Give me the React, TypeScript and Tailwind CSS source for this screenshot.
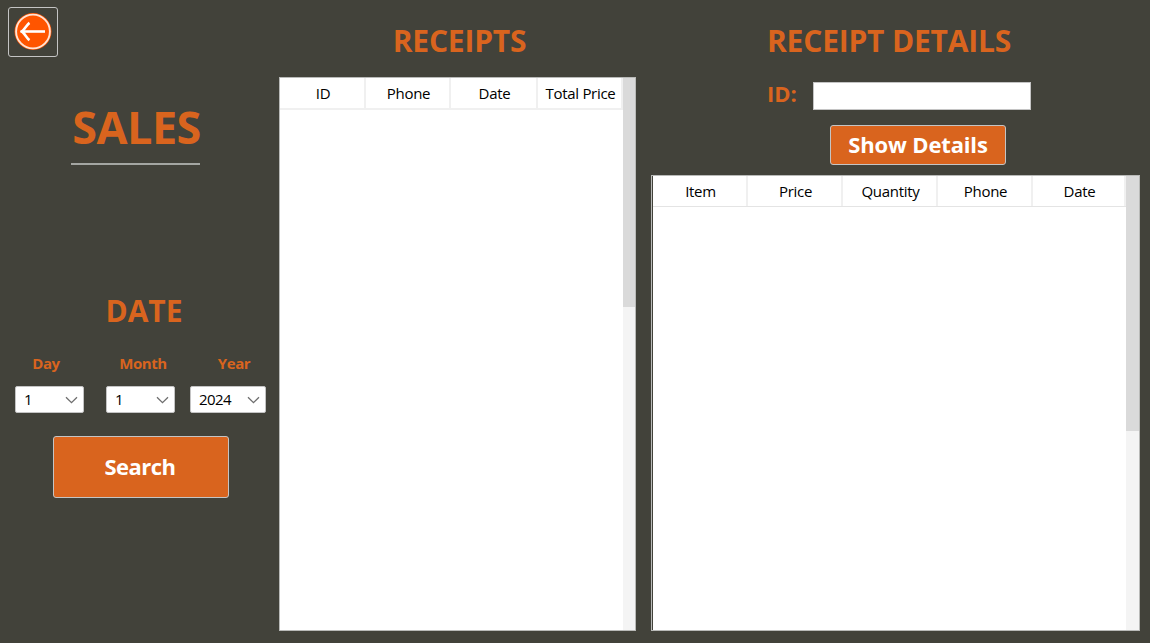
import React from "react";

function Select({ value, width }: { value: string; width: string }) {
  return (
    <button
      className={`flex h-[27px] items-center justify-between rounded-[2px] border border-[#c4c4c4] bg-white pr-[5px] pl-[8px] text-[15px] leading-none text-black ${width}`}
    >
      <span className="tracking-[-0.6px]">{value}</span>
      <svg width="13" height="9" viewBox="0 0 13 9" fill="none" stroke="#6e6e6e" strokeWidth="1.3">
        <path d="M1 2.2 L6.5 7.7 L12 2.2" />
      </svg>
    </button>
  );
}

function HeaderCell({ label, className }: { label: string; className: string }) {
  return (
    <div className={`flex shrink-0 items-center justify-center border-r-2 border-[#f0f0f0] pl-[2px] text-[15px] leading-none tracking-[-0.3px] whitespace-nowrap text-black ${className}`}>
      {label}
    </div>
  );
}

function ScrollBar({ width, thumb }: { width: string; thumb: string }) {
  return (
    <div className={`shrink-0 bg-[#f4f4f4] ${width}`}>
      <div className={`bg-[#dadada] ${thumb}`} />
    </div>
  );
}

export default function App() {
  return (
    <div className="flex h-[643px] w-[1150px] overflow-hidden bg-[#42423a] font-['Open_Sans','Noto_Sans',sans-serif] text-[#d9641e]">
      <aside className="flex w-[279px] shrink-0 flex-col">
        <button className="mt-[7px] ml-[8px] flex size-[50px] items-center justify-center rounded-[3px] border border-[#c4c4c4]">
          <svg width="38" height="38" viewBox="0 0 38 38" fill="none">
            <circle cx="19" cy="18.5" r="18.5" fill="#ff5500" />
            <circle cx="19" cy="18.5" r="16.9" stroke="#ffe4d6" strokeWidth="1.9" />
            <path d="M6.5 18.5H31" stroke="#fff" strokeWidth="2.6" />
            <path d="M15.5 9.8C13 11.5 11.5 15.5 8 18.5C11.5 21.5 13 25.5 15.5 27.2" stroke="#fff" strokeWidth="2.6" />
          </svg>
        </button>
        <h1 className="mt-[40px] ml-[71px] h-[60px] w-[131px] text-center text-[45px] leading-[60px] font-bold tracking-[-0.5px] whitespace-nowrap">
          SALES
        </h1>
        <div className="mt-[6px] ml-[71px] h-[2px] w-[129px] bg-[#a4a6a2]" />
        <h2 className="mt-[126px] ml-[94px] h-[40px] w-[100px] text-center text-[30px] leading-[40px] font-bold">DATE</h2>
        <div className="mt-[22px] flex h-5 text-[15px] leading-5 font-bold tracking-[-0.4px]">
          <span className="ml-[16px] w-[60px] text-center">Day</span>
          <span className="ml-[37px] w-[60px] text-center">Month</span>
          <span className="ml-[31px] w-[60px] text-center">Year</span>
        </div>
        <div className="mt-[13px] ml-[15px] flex">
          <Select value="1" width="w-[69px]" />
          <div className="w-[22px]" />
          <Select value="1" width="w-[69px]" />
          <div className="w-[15px]" />
          <Select value="2024" width="w-[76px]" />
        </div>
        <button className="mt-[23px] ml-[53px] h-[62px] w-[176px] rounded-[3px] border border-[#c4c4c4] bg-[#d9641e] pr-[2px] pb-[2px] text-[22px] font-bold tracking-[-0.5px] text-white">
          Search
        </button>
      </aside>

      <section className="flex w-[357px] shrink-0 flex-col">
        <h2 className="mt-[21px] h-[40px] pl-[4px] text-center text-[30px] leading-[40px] font-bold tracking-[-0.2px]">
          RECEIPTS
        </h2>
        <div className="mt-[16px] flex h-[554px] border border-[#b9bab8] bg-white">
          <div className="flex h-[32px] w-[343px] shrink-0 border-b-2 border-[#f0f0f0]">
            <HeaderCell label="ID" className="w-[86px]" />
            <HeaderCell label="Phone" className="w-[85px]" />
            <HeaderCell label="Date" className="w-[87px]" />
            <HeaderCell label="Total Price" className="w-[85px]" />
          </div>
          <ScrollBar width="w-[12px]" thumb="h-[229px]" />
        </div>
      </section>

      <section className="ml-[15px] flex w-[489px] shrink-0 flex-col">
        <h2 className="mt-[21px] h-[40px] pr-[13px] text-center text-[30px] leading-[40px] font-bold tracking-[-0.2px] whitespace-nowrap">
          RECEIPT DETAILS
        </h2>
        <div className="mt-[21px] flex h-[28px]">
          <label className="ml-[116px] w-[46px] text-[22px] leading-[22px] font-bold">ID:</label>
          <input className="h-[28px] w-[218px] border border-[#c4c4c4] bg-white outline-none" />
        </div>
        <button className="mt-[15px] ml-[179px] h-[40px] w-[176px] rounded-[3px] border border-[#c4c4c4] bg-[#d9641e] pb-[2px] text-[22px] leading-none font-bold tracking-[-0.15px] whitespace-nowrap text-white">
          Show Details
        </button>
        <div className="mt-[10px] flex h-[456px] border border-[#b9bab8] bg-white">
          <div className="w-px shrink-0 bg-[#42423a]" />
          <div className="flex h-[31px] w-[473px] shrink-0 border-b border-[#e4e4e4]">
            <HeaderCell label="Item" className="w-[95px]" />
            <HeaderCell label="Price" className="w-[95px]" />
            <HeaderCell label="Quantity" className="w-[95px]" />
            <HeaderCell label="Phone" className="w-[95px]" />
            <HeaderCell label="Date" className="w-[93px]" />
          </div>
          <ScrollBar width="w-[13px]" thumb="h-[255px]" />
        </div>
      </section>
    </div>
  );
}
